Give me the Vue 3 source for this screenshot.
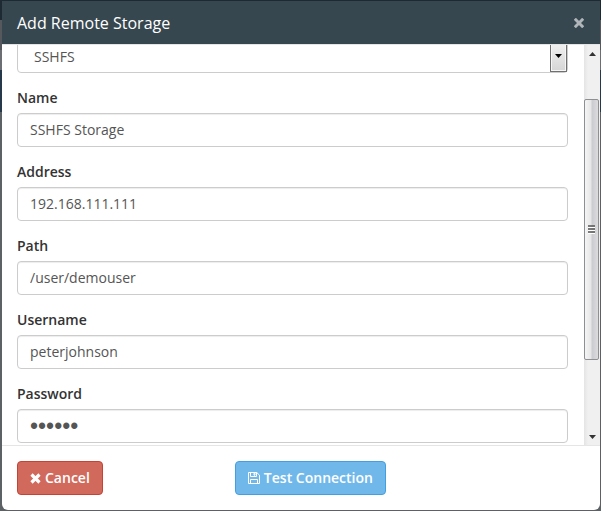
<script setup>
import { onMounted, ref } from 'vue'

const scroller = ref(null)
const type = ref('SSHFS')
const fields = ref([
  { id: 'name', label: 'Name', type: 'text', value: 'SSHFS Storage' },
  { id: 'address', label: 'Address', type: 'text', value: '192.168.111.111' },
  { id: 'path', label: 'Path', type: 'text', value: '/user/demouser' },
  { id: 'username', label: 'Username', type: 'text', value: 'peterjohnson' },
  { id: 'password', label: 'Password', type: 'password', value: '●●●●●●' },
])

onMounted(() => {
  scroller.value.scrollTop = 21
})
</script>

<template>
  <div class="backdrop">
    <section class="modal" role="dialog" aria-labelledby="title">
      <header class="head">
        <h1 id="title">Add Remote Storage</h1>
        <button class="close" type="button" aria-label="Close">
          <svg viewBox="0 0 10 10" width="10" height="10"><path d="M.8 .8 9.2 9.2M9.2 .8 .8 9.2" fill="none" stroke="currentColor" stroke-width="3" /></svg>
        </button>
      </header>
      <div class="body">
        <form ref="scroller" class="form">
          <div class="field">
            <div class="select">
              <select v-model="type" aria-label="Type"><option>SSHFS</option></select>
              <span class="drop"><svg viewBox="0 0 7 4" width="7" height="4"><path d="M0 0h7L3.5 4z" fill="#000" /></svg></span>
            </div>
          </div>
          <div v-for="f in fields" :key="f.id" class="field">
            <label :for="f.id">{{ f.label }}</label>
            <input :id="f.id" v-model="f.value" :type="f.type" autocomplete="off">
          </div>
        </form>
        <div class="bar" aria-hidden="true">
          <span class="arrow"><svg viewBox="0 0 7 4" width="7" height="4"><path d="M0 4h7L3.5 0z" fill="#333" /></svg></span>
          <span class="track">
            <span class="before"></span>
            <span class="thumb"><svg viewBox="0 0 7 9" width="7" height="9"><path d="M0 1h7M0 4h7M0 7h7" stroke="#555" stroke-width="1.4" /><path d="M0 2.5h7M0 5.5h7M0 8.5h7" stroke="#fff" /></svg></span>
            <span class="after"></span>
          </span>
          <span class="arrow"><svg viewBox="0 0 7 4" width="7" height="4"><path d="M0 0h7L3.5 4z" fill="#333" /></svg></span>
        </div>
      </div>
      <footer class="foot">
        <button class="btn cancel" type="button">
          <svg viewBox="0 0 11 11" width="11" height="11"><path d="M1.5 1.5 9.5 9.5M9.5 1.5 1.5 9.5" fill="none" stroke="#fff" stroke-width="3.2" /></svg>
          <span>Cancel</span>
        </button>
        <button class="btn test" type="button">
          <svg viewBox="0 0 12 12" width="12" height="12"><path d="M.5.5h8.3l2.7 2.7v8.3H.5zM2.5 11.5v-4h7v4M2.5.5v4h6v-4M6 1.2h1v2H6z" fill="none" stroke="#fff" /></svg>
          <span>Test Connection</span>
        </button>
      </footer>
    </section>
  </div>
</template>

<style>
body {
  margin: 0;
}
</style>

<style scoped>
* {
  box-sizing: border-box;
}
.backdrop {
  height: 100vh;
  padding: 1px 1px 1px 2px;
  background: linear-gradient(#1d2a33 0 20px, #55595d 20px 50px, #6b6e72 50px 70px, #25394a 70px 112px, #5c6166 112px);
  font-family: "Open Sans", sans-serif;
  font-size: 14px;
  line-height: 20px;
  color: #333;
}
.modal {
  display: flex;
  flex-direction: column;
  height: 100%;
  overflow: hidden;
  background: #fff;
  border-radius: 0 0 6px 6px;
}
.head {
  display: flex;
  flex: none;
  align-items: center;
  justify-content: space-between;
  height: 44px;
  padding: 0 16px 0 15px;
  background: #37474f;
  border-bottom: 1px solid #e5e5e5;
}
h1 {
  margin: 0;
  font-size: 16px;
  font-weight: 400;
  color: #fff;
}
.close {
  display: flex;
  padding: 0;
  border: 0;
  background: none;
  color: #afb5b9;
}
.body {
  display: flex;
  flex: 1;
  min-height: 0;
}
.form {
  flex: 1;
  min-width: 0;
  padding: 15px 16px 120px 15px;
  overflow: hidden;
}
.field {
  margin-bottom: 15px;
}
label {
  display: block;
  margin-bottom: 5px;
  font-weight: 600;
}
input,
select {
  display: block;
  width: 100%;
  height: 34px;
  padding: 5px 12px 7px;
  border: 1px solid #ccc;
  border-radius: 4px;
  background: #fff;
  box-shadow: inset 0 1px 1px rgba(0, 0, 0, 0.075);
  font: inherit;
  color: #555;
  outline: 0;
}
input[type="password"] {
  padding: 3px 12px;
  font-family: "Liberation Sans", sans-serif;
  font-size: 23px;
}
select {
  appearance: none;
  padding: 7px 16px 5px;
}
.select {
  position: relative;
}
.drop {
  position: absolute;
  top: 1px;
  right: 1px;
  bottom: 1px;
  display: flex;
  align-items: center;
  justify-content: center;
  width: 17px;
  border: 1px solid #707070;
  background: linear-gradient(#f4f4f4, #d5d5d5);
  box-shadow: inset 0 0 0 1px #f6f6f6;
  pointer-events: none;
}
.bar {
  display: flex;
  flex: none;
  flex-direction: column;
  width: 16px;
  background: linear-gradient(90deg, #e4e4e4, #f0f0f0 4px);
}
.arrow {
  display: flex;
  align-items: center;
  justify-content: center;
  height: 17px;
}
.track {
  display: flex;
  flex: 1;
  flex-direction: column;
}
.before {
  flex: 37;
}
.thumb {
  display: flex;
  flex: 261;
  align-items: center;
  justify-content: center;
  margin-right: 1px;
  border: 1px solid #8e8f93;
  border-radius: 2px;
  background: linear-gradient(90deg, #f5f5f5, #e6e6e8 45%, #cbccd0 55%, #dcdcde);
}
.after {
  flex: 68;
}
.foot {
  display: grid;
  flex: none;
  grid-template-columns: 28fr 45fr;
  align-items: center;
  justify-items: start;
  padding: 15px;
  border-top: 1px solid #e5e5e5;
}
.btn {
  display: flex;
  align-items: center;
  gap: 4px;
  height: 34px;
  padding: 0 12px;
  border: 1px solid;
  border-radius: 4px;
  font: inherit;
  font-weight: 600;
  color: #fff;
}
.cancel {
  border-color: #c64333;
  background: #d16a5c;
}
.test {
  border-color: #449fe2;
  background: #70b8ea;
}
</style>
